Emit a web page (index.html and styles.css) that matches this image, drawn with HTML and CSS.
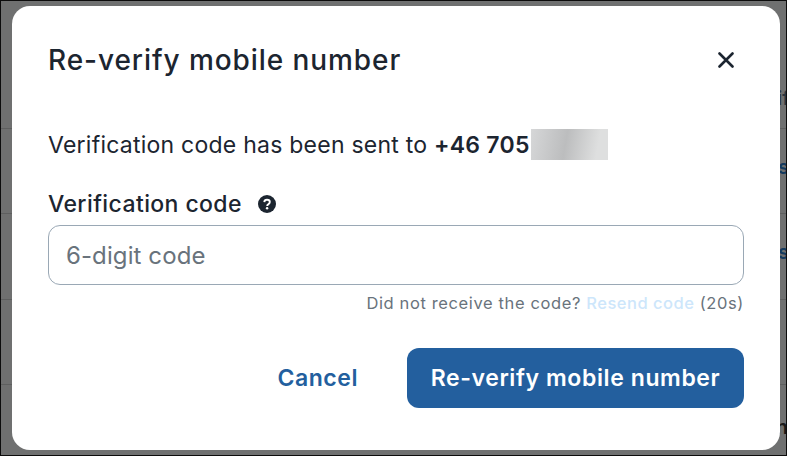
FILE: index.html
```html
<!DOCTYPE html>
<html lang="en">
<head>
<meta charset="utf-8">
<title>Re-verify mobile number</title>
<link rel="stylesheet" href="styles.css">
</head>
<body>
<div class="page">
  <div class="backdrop-rows">
    <div class="row row-first"><span class="frag frag-dark">if</span></div>
    <div class="row row-text"><span class="frag">Is</span></div>
    <div class="row row-text"><span class="frag">Is</span></div>
    <div class="row"></div>
    <div class="row"><span class="frag frag-last">n</span></div>
  </div>
  <div class="modal" role="dialog">
    <header class="modal-head">
      <h1 class="title">Re-verify mobile number</h1>
      <button class="close" aria-label="Close">
        <svg viewBox="0 0 16 16" width="16" height="16"><path d="M1.5 1.5 14.5 14.5M14.5 1.5 1.5 14.5" fill="none" stroke="#1c2530" stroke-width="2.6" stroke-linecap="round"/></svg>
      </button>
    </header>
    <p class="sent">Verification code has been sent to <strong>+46 705</strong><span class="blur"></span></p>
    <div class="label-row">
      <label class="label" for="code">Verification code</label>
      <svg class="help" viewBox="0 0 18 18" width="18" height="18"><circle cx="9" cy="9" r="9" fill="#1c2530"/><path d="M6.3 7.1C6.4 5.6 7.5 4.8 9 4.8c1.6 0 2.8.9 2.8 2.3 0 1.2-.8 1.8-1.6 2.3-.7.4-1 .8-1 1.5" fill="none" stroke="#fff" stroke-width="1.9"/><circle cx="9.1" cy="13.2" r="1.2" fill="#fff"/></svg>
    </div>
    <input class="input" id="code" placeholder="6-digit code">
    <p class="hint">Did not receive the code? <span class="resend">Resend code</span> (20s)</p>
    <footer class="actions">
      <button class="btn-cancel">Cancel</button>
      <button class="btn-primary">Re-verify mobile number</button>
    </footer>
  </div>
</div>
</body>
</html>
```
FILE: styles.css
```css
* { box-sizing: border-box; }
html, body { margin: 0; height: 100%; }
body { font-family: "Inter", "Liberation Sans", sans-serif; color: #1c2530; overflow: hidden; background: #6f7070; }
.page { position: relative; width: 787px; height: 456px; background: #6f7070; border: 1px solid #0c0c0c; overflow: hidden; }
.backdrop-rows { display: flex; flex-direction: column; }
.row { height: 85.3px; border-bottom: 1px solid #5e5f5f; display: flex; justify-content: flex-end; align-items: center; }
.row-text { padding-bottom: 9px; }
.row-first { height: 128px; align-items: flex-end; padding-bottom: 18px; }
.frag { font-size: 20px; font-weight: 600; color: #143a5e; margin-right: -3px; line-height: 24px; }
.frag-dark { color: #2a3540; margin-right: -4px; }
.frag-last { color: #1a1a1a; margin-right: -2px; }
.modal { position: absolute; left: 11px; top: 5px; width: 768px; height: 444px; background: #fff; border-radius: 18px; padding: 0 36px; display: flex; flex-direction: column; }
.modal-head { display: flex; justify-content: space-between; align-items: center; height: 108px; }
.title { margin: 0; font-size: 28px; font-weight: 500; letter-spacing: 0.93px; line-height: 108px; }
.close { border: 0; background: none; padding: 0; margin-right: 10px; width: 16px; height: 16px; display: flex; }
.sent { margin: 15px 0 0; font-size: 23px; letter-spacing: 0.24px; line-height: 30px; font-weight: 400; display: flex; align-items: center; white-space: pre; }
.sent strong { font-weight: 600; }
.blur { display: block; width: 77px; height: 31px; margin-left: 1px; background: linear-gradient(100deg, #d6d7d8 0%, #bcbdbe 45%, #dedfdf 85%); }
.label-row { display: flex; align-items: center; gap: 16px; margin-top: 29px; height: 30px; }
.label { font-size: 23px; font-weight: 500; letter-spacing: 0.4px; }
.input { display: block; width: 100%; height: 60px; margin-top: 6px; border: 1px solid #9aa8b5; border-radius: 12px; padding: 0 17px; font: 400 24px "Inter", sans-serif; letter-spacing: 0.1px; color: #1c2530; outline: none; }
.input::placeholder { color: #69737c; opacity: 1; }
.hint { margin: 8px 0 0; text-align: right; font-size: 16.5px; letter-spacing: 0.62px; line-height: 20px; color: #69737c; }
.resend { color: #cde6fb; font-weight: 500; letter-spacing: 0.5px; }
.actions { display: flex; justify-content: flex-end; align-items: center; gap: 49px; margin-top: 35px; }
.btn-cancel { border: 0; background: none; padding: 0; font: 600 23px "Inter", sans-serif; letter-spacing: 0.55px; color: #235f9e; }
.btn-primary { border: 0; width: 337px; height: 60px; border-radius: 12px; background: #235f9e; color: #fff; font: 600 23px "Inter", sans-serif; letter-spacing: 0.6px; padding: 0; }
```
